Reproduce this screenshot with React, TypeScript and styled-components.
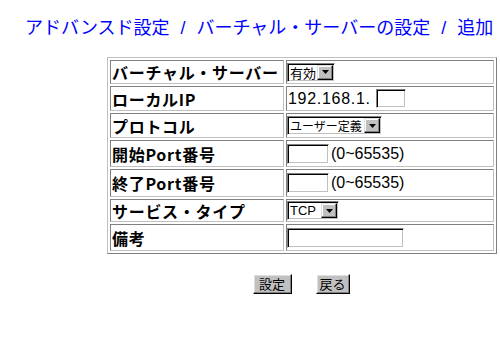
import React from "react";
import styled, { createGlobalStyle } from "styled-components";

const GlobalStyle = createGlobalStyle`
  html, body { margin: 0; padding: 0; background: #ffffff; }
  body { font-family: "Noto Sans CJK JP", "Liberation Sans", sans-serif; color: #000; }
`;

const Page = styled.div`
  padding-top: 17px;
  width: 500px;
`;

const Title = styled.h1`
  margin: 0;
  padding-left: 25px;
  height: 18px;
  font-size: 18px;
  line-height: 18px;
  font-weight: normal;
  color: #0000ff;
  white-space: nowrap;
`;

const Separator = styled.span`
  display: inline-block;
  width: 27px;
  text-align: center;
  font-family: "Liberation Sans", sans-serif;
  font-size: 18px;
`;

const FormGrid = styled.div`
  display: grid;
  grid-template-columns: 174px 208px;
  grid-template-rows: 24px 25px 25px 27px 28px 23px 27px;
  gap: 2px;
  padding: 2px;
  box-sizing: border-box;
  width: 390px;
  margin: 22px 0 0 107px;
  border: 1px solid;
  border-color: #c0c0c0 #808080 #808080 #c0c0c0;
`;

const Cell = styled.div`
  box-sizing: border-box;
  display: flex;
  align-items: center;
  padding: 0 1px;
  border: 1px solid;
  border-color: #808080 #c0c0c0 #c0c0c0 #808080;
  white-space: nowrap;
`;

const LabelCell = styled(Cell)`
  font-size: 16px;
  font-weight: bold;
  letter-spacing: 0.7px;
`;

const ValueCell = styled(Cell)`
  gap: 2px;
`;

const PlainText = styled.span<{ $ls?: number }>`
  font-family: "Liberation Sans", sans-serif;
  font-size: 16px;
  letter-spacing: ${(p) => p.$ls ?? 0}px;
`;

const SelectBox = styled.span<{ $w: number }>`
  display: inline-flex;
  align-items: stretch;
  box-sizing: border-box;
  width: ${(p) => p.$w}px;
  height: 19px;
  margin-left: -1px;
  padding: 1px;
  background: #ffffff;
  border: 1px solid;
  border-color: #808080 #ffffff #ffffff #808080;
  box-shadow: inset 1px 1px #000000, inset -1px -1px #c0c0c0;
`;

const SelectText = styled.span<{ $latin?: boolean; $size: number }>`
  flex: 1;
  display: flex;
  align-items: center;
  padding-left: 1px;
  font-family: ${(p) =>
    p.$latin ? '"Liberation Sans", sans-serif' : '"Noto Sans CJK JP", sans-serif'};
  font-size: ${(p) => p.$size}px;
  line-height: 15px;
`;

const ArrowButton = styled.span`
  box-sizing: border-box;
  width: 16px;
  flex: none;
  display: flex;
  align-items: center;
  justify-content: center;
  background: #c0c0c0;
  border: 1px solid;
  border-color: #dfdfdf #000000 #000000 #dfdfdf;
  box-shadow: inset -1px -1px #808080, inset 1px 1px #ffffff;
`;

const TextBox = styled.input<{ $w: number; $h: number; $ml?: number }>`
  box-sizing: border-box;
  width: ${(p) => p.$w}px;
  height: ${(p) => p.$h}px;
  margin: 0 0 0 ${(p) => p.$ml ?? -1}px;
  padding: 0 2px;
  background: #ffffff;
  border: 1px solid;
  border-color: #808080 #ffffff #ffffff #808080;
  box-shadow: inset 1px 1px #000000, inset -1px -1px #c0c0c0;
  outline: none;
  font-size: 13px;
`;

const ButtonRow = styled.div`
  display: flex;
  justify-content: center;
  gap: 24px;
  width: 390px;
  margin: 20px 0 0 107px;
  padding-right: 2px;
  box-sizing: border-box;
`;

const Button = styled.button<{ $w: number }>`
  box-sizing: border-box;
  width: ${(p) => p.$w}px;
  height: 20px;
  padding: 0;
  margin: 0;
  background: #c0c0c0;
  border: 1px solid;
  border-color: #ffffff #000000 #000000 #ffffff;
  box-shadow: inset -1px -1px #808080, inset 1px 1px #dfdfdf;
  font-family: "Noto Sans CJK JP", sans-serif;
  font-size: 13px;
  line-height: 16px;
  color: #000;
`;

const Arrow = () => (
  <svg width="7" height="4" viewBox="0 0 7 4">
    <polygon points="0,0 7,0 3.5,4" fill="#000" />
  </svg>
);

const Select = ({
  w,
  value,
  latin,
  size = 13,
}: {
  w: number;
  value: string;
  latin?: boolean;
  size?: number;
}) => (
  <SelectBox $w={w}>
    <SelectText $latin={latin} $size={size}>
      {value}
    </SelectText>
    <ArrowButton>
      <Arrow />
    </ArrowButton>
  </SelectBox>
);

export default function App() {
  return (
    <Page>
      <GlobalStyle />
      <Title>
        アドバンスド設定<Separator>/</Separator>バーチャル・サーバーの設定
        <Separator>/</Separator>追加
      </Title>
      <FormGrid>
        <LabelCell>バーチャル・サーバー</LabelCell>
        <ValueCell>
          <Select w={48} value="有効" size={13} />
        </ValueCell>

        <LabelCell>ローカルIP</LabelCell>
        <ValueCell>
          <PlainText $ls={0.7}>192.168.1.</PlainText>
          <TextBox $w={30} $h={19} $ml={3} />
        </ValueCell>

        <LabelCell>プロトコル</LabelCell>
        <ValueCell>
          <Select w={95} value="ユーザー定義" size={12} />
        </ValueCell>

        <LabelCell>開始Port番号</LabelCell>
        <ValueCell>
          <TextBox $w={42} $h={20} />
          <PlainText>(0~65535)</PlainText>
        </ValueCell>

        <LabelCell>終了Port番号</LabelCell>
        <ValueCell>
          <TextBox $w={42} $h={20} />
          <PlainText>(0~65535)</PlainText>
        </ValueCell>

        <LabelCell>サービス・タイプ</LabelCell>
        <ValueCell>
          <Select w={52} value="TCP" latin size={13} />
        </ValueCell>

        <LabelCell>備考</LabelCell>
        <ValueCell>
          <TextBox $w={117} $h={20} />
        </ValueCell>
      </FormGrid>
      <ButtonRow>
        <Button $w={39}>設定</Button>
        <Button $w={34}>戻る</Button>
      </ButtonRow>
    </Page>
  );
}
